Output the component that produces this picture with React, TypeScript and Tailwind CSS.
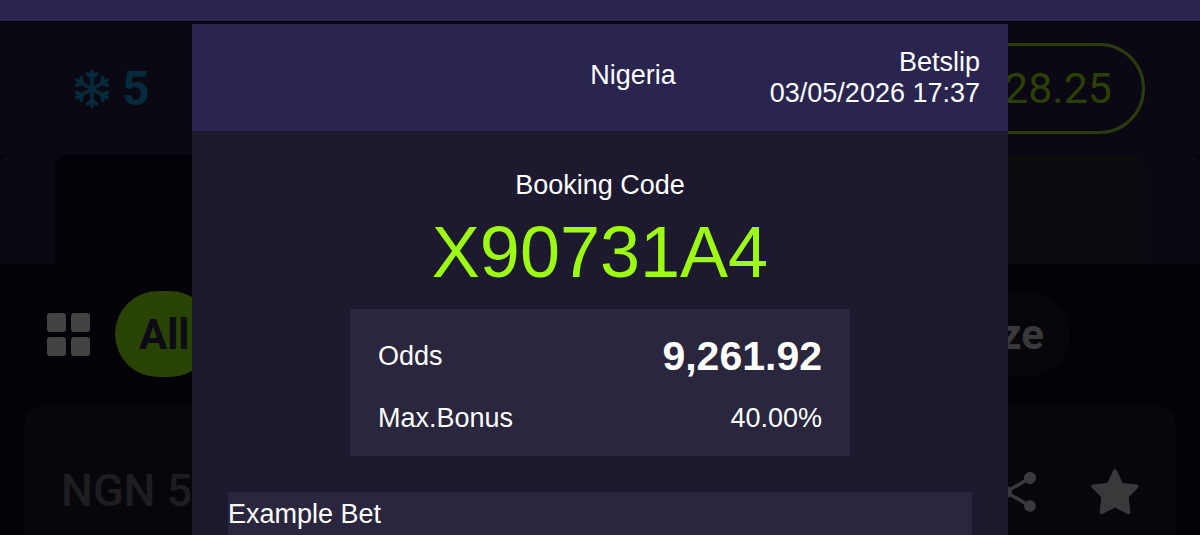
import { MdShare } from 'react-icons/md';

const betInfo = [
  { label: 'Odds', value: '9,261.92', valueClass: 'text-[41px] font-bold' },
  { label: 'Max.Bonus', value: '40.00%', valueClass: '' },
];

const snowflakeAngles = [0, 60, 120, 180, 240, 300];

function SnowflakeIcon() {
  return (
    <svg width="36" height="40" viewBox="0 0 36 40" fill="none" stroke="currentColor" strokeWidth="3.6" strokeLinecap="round" strokeLinejoin="round" aria-hidden="true">
      <circle cx="18" cy="20" r="1.5" />
      {snowflakeAngles.map((angle) => (
        <path key={angle} d="M18 20 V2.5 M13.6 5 L18 8.8 L22.4 5" transform={`rotate(${angle} 18 20)`} />
      ))}
    </svg>
  );
}

function GridIcon() {
  return (
    <svg width="43" height="43" viewBox="0 0 43 43" fill="currentColor" aria-hidden="true">
      <rect x="0" y="0" width="19" height="19" rx="3" />
      <rect x="24" y="0" width="19" height="19" rx="3" />
      <rect x="0" y="24" width="19" height="19" rx="3" />
      <rect x="24" y="24" width="19" height="19" rx="3" />
    </svg>
  );
}

function StarIcon() {
  return (
    <svg width="48" height="46" viewBox="0 0 48 46" fill="currentColor" stroke="currentColor" strokeWidth="4" strokeLinejoin="round" aria-hidden="true">
      <path d="M24 2.4 L30.4 15.8 L45.6 17.4 L35.6 27.6 L37.4 43.2 L24 36.3 L10.6 43.2 L12.4 27.6 L2.4 17.4 L17.6 15.8 Z" />
    </svg>
  );
}

function PageBehind() {
  return (
    <div className="bg-[#030208] font-['Roboto',sans-serif]">
      <header className="flex items-center justify-between h-[133px] pl-[74px] pr-[55px] bg-[#0a0812]">
        <div className="flex items-center gap-3 text-[#052a3c]">
          <SnowflakeIcon />
          <span className="text-5xl font-bold">5</span>
        </div>
        <button className="flex items-center justify-end w-[320px] h-[91px] pr-[30px] rounded-full border-3 border-[#2b3b0d] text-[43px] text-[#2b4006]">
          28.25
        </button>
      </header>

      {/* tabs */}
      <div className="flex justify-between h-[109px] px-[55px] rounded-t-lg bg-[#0a0812]">
        <div className="w-1/2 rounded-tl-xl bg-[#030208]" />
        <div className="w-1/2 rounded-tr-xl bg-[#0c0b0f]" />
      </div>

      {/* filters */}
      <div className="flex items-center justify-between h-[140px] pl-[47px] pr-[130px] text-[42px] font-bold">
        <div className="flex items-center gap-[25px] text-[#424242]">
          <GridIcon />
          <button className="h-[86px] px-6 rounded-full bg-[#294304] text-[#0c0b17]">All</button>
        </div>
        <button className="w-[160px] h-[86px] pr-[26px] rounded-full bg-[#07060b] text-[#39383b] text-right">ze</button>
      </div>

      <div className="flex items-start justify-between mx-6 h-[300px] pt-[60px] px-[37px] rounded-3xl bg-[#07060b]">
        <span className="text-[45px] leading-[54px] font-medium text-[#1e1d22]">NGN 5</span>
        <div className="flex items-center gap-[49px] pt-1 text-[#39383b]">
          <button aria-label="Share">
            <MdShare size={48} />
          </button>
          <button aria-label="Favourite">
            <StarIcon />
          </button>
        </div>
      </div>
    </div>
  );
}

function BetslipDialog() {
  return (
    <section
      role="dialog"
      aria-label="Betslip"
      className="absolute inset-x-0 top-6 mx-auto w-[68%] min-h-full bg-[#1d1a30] text-white text-[27px] leading-[31px] font-['Liberation_Sans',sans-serif]"
    >
      <div className="flex items-center justify-end gap-[94px] h-[107px] px-7 bg-[#29254f]">
        <div className="pb-1">Nigeria</div>
        <div className="text-right">
          <p>Betslip</p>
          <p>03/05/2026 17:37</p>
        </div>
      </div>

      <div className="flex flex-col items-center pt-[39px] px-9">
        <p>Booking Code</p>
        <p className="mt-[9px] text-7xl leading-[84px] text-[#9dfb12]">X90731A4</p>

        <dl className="flex flex-col gap-4 w-[500px] mt-[15px] px-7 pt-6 pb-[15px] bg-[#29263d]">
          {betInfo.map((item) => (
            <div key={item.label} className="flex items-center justify-between h-[46px]">
              <dt>{item.label}</dt>
              <dd className={item.valueClass}>{item.value}</dd>
            </div>
          ))}
        </dl>

        <div className="w-full mt-9 py-[7px] h-[120px] bg-[#29263d]">Example Bet</div>
      </div>
    </section>
  );
}

export default function App() {
  return (
    <div className="relative h-screen overflow-hidden bg-[#030208]">
      <div className="h-[22px] border-b border-black bg-[#29254f]" />
      <PageBehind />
      <BetslipDialog />
    </div>
  );
}
